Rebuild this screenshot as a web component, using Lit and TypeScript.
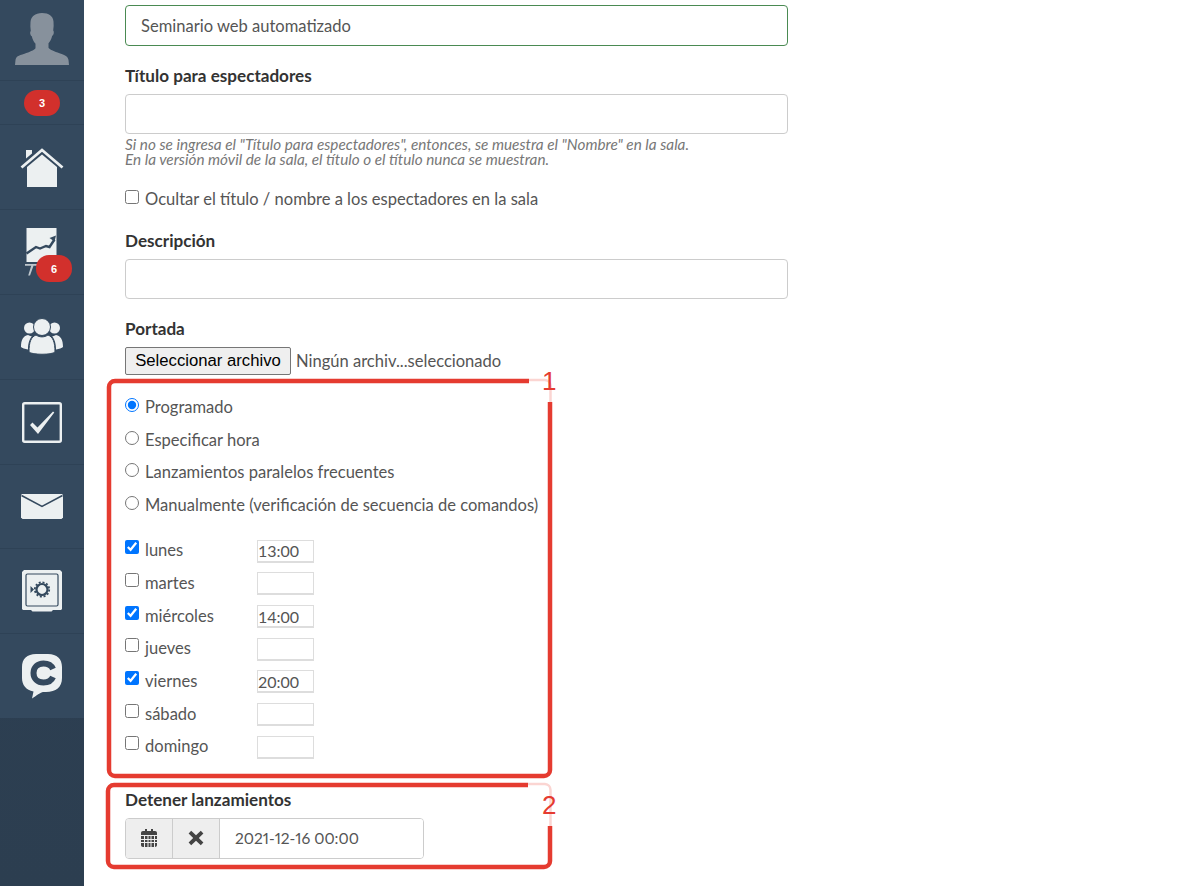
import { LitElement, html, css, svg } from "lit";
import { customElement } from "lit/decorators.js";

const radios = ["Programado", "Especificar hora", "Lanzamientos paralelos frecuentes", "Manualmente (verificación de secuencia de comandos)"];
const days: [string, string][] = [["lunes", "13:00"], ["martes", ""], ["miércoles", "14:00"], ["jueves", ""], ["viernes", "20:00"], ["sábado", ""], ["domingo", ""]];

const W = "#ecf0f1";
const D = "#34495e";
const icons = {
  avatar: svg`<svg width="56" height="54" viewBox="0 0 56 54"><path fill="#87919c" d="M28 0c-7 0-11 3.500-11.500 9-.3 3-.2 6 .3 9-.6.500-.8 1.500-.5 3 .3 1.300.8 2 1.500 2.300.7 3 2 5.500 3.700 7.500v4.500c-1.500 2-6 3.700-11 5.500C4 42.500 2 44 1.500 47L1 52h54l-.5-5c-.5-3-2.500-4.500-9-6.700-5-1.800-9.500-3.500-11-5.500v-4.500c1.700-2 3-4.500 3.700-7.500.7-.3 1.200-1 1.500-2.300.3-1.500.1-2.500-.5-3 .5-3 .6-6 .3-9C39 3 35 0 28 0z"/></svg>`,
  home: svg`<svg width="44" height="40" viewBox="0 0 44 40"><path fill="${W}" d="M22 7.500 37 20v20H7V20z"/><path fill="${W}" d="M6 3h6v3.500L6 11.500z"/><path fill="none" stroke="${W}" stroke-width="2.800" d="M1.500 20.500 22 3l20.500 17.500"/></svg>`,
  chart: svg`<svg width="34" height="48" viewBox="0 0 34 48"><path fill="${W}" d="M1.500 0h30v34h-30z"/><path fill="none" stroke="${D}" stroke-width="2.400" d="M1.500 25.500 11 19l4 1.500 6-2.500 3.500 1 5-7.500"/><path fill="${D}" d="M31 7.500l-6.500 2.500 5 3.500z"/><path fill="${W}" fill-opacity=".75" d="M0 36h20v1.800H8.500L5 47.500H3.200L6.200 37.800H0z"/></svg>`,
  users: svg`<svg width="44" height="38" viewBox="0 0 44 38"><g fill="${W}"><circle cx="9.500" cy="10" r="5.500"/><circle cx="34.500" cy="10" r="5.500"/><path d="M1 29c0-7 2-11 7-12 1.500 1 3 1.500 4 1-2.500 3-4 7-4 13.500C5 31 2 30 1 29zM43 29c0-7-2-11-7-12-1.500 1-3 1.500-4 1 2.500 3 4 7 4 13.500 3-.5 6-1.500 7-2.500z"/></g><circle cx="22" cy="9" r="8.500" fill="${W}" stroke="${D}" stroke-width="1"/><path fill="${W}" stroke="${D}" stroke-width="1" d="M9 34c0-10 2-15 7-17 3.500 2.500 8.500 2.500 12 0 5 2 7 7 7 17-3 3-23 3-26 0z"/></svg>`,
  check: svg`<svg width="40" height="41" viewBox="0 0 40 41"><rect x="1.200" y="1.200" width="37.600" height="38.600" rx="1.500" fill="none" stroke="${W}" stroke-width="2.400"/><path fill="${W}" d="M8 23l2.500-2.500 5 5L31 9.500l1.300 1L16 32z"/></svg>`,
  mail: svg`<svg width="42" height="25" viewBox="0 0 42 25"><path fill="${W}" d="M1 0h40l1 1v22.500L40.500 25h-39L0 23.500V1z"/><path fill="none" stroke="${D}" stroke-width="1.500" d="M.5 1.500 21 12.500 41.500 1.500"/></svg>`,
  safe: svg`<svg width="40" height="42" viewBox="0 0 40 42"><path fill="${W}" d="M2 0h36l2 2v37l-1 1H31l-1.500 1.500H10.500L9 40H1l-1-1V2z"/><rect x="4" y="4" width="32" height="32" rx="1.500" fill="${W}" stroke="${D}" stroke-width="1.200"/><circle cx="20" cy="19.500" r="5.500" fill="none" stroke="${D}" stroke-width="2.200"/><circle cx="20" cy="19.500" r="7.200" fill="none" stroke="${D}" stroke-width="1.800" stroke-dasharray="2 1.800"/><path fill="${D}" d="M8.500 16l3.500 3.500-3.500 3.500z"/></svg>`,
  chat: svg`<svg width="40" height="45" viewBox="0 0 40 45"><path fill="${W}" d="M14 0h12c9 0 14 5 14 13v11c0 9-6 14-16 14h-3c-2 0-7 4-11 6.500l1.500-7C4 36 0 31 0 24V13C0 5 5 0 14 0z"/><path fill="none" stroke="${D}" stroke-width="6" d="M31 15C29.500 11.500 26 9.500 21.500 9.500 15.500 9.500 11.500 13.500 11.500 19S15.500 28.500 21.500 28.500c4.500 0 8-2 9.500-5.500"/></svg>`,
};

@customElement("app-root")
export class AppRoot extends LitElement {
  static styles = css`
    :host { display: block; position: relative; height: 886px; overflow: hidden; background: #fff; font-family: "Lato", "Liberation Sans", sans-serif; font-size: 16.55px; color: #555; }
    .page { display: flex; height: 886px; }
    .side { width: 84px; flex: none; display: flex; flex-direction: column; background: linear-gradient(#2f4257, #2c3e50); }
    .nav { background: #34495e; display: flex; align-items: center; justify-content: center; height: 84px; border-bottom: 1px solid #2e4256; position: relative; flex: none; }
    .nav.top { height: 80px; }
    .nav.badge-row { height: 43px; }
    .nav.short { height: 83px; }
    .nav.last { border-bottom: none; }
    .badge { background: #d2302c; color: #fff; font: bold 11px "Liberation Sans", sans-serif; border-radius: 13px; display: flex; align-items: center; justify-content: center; width: 36px; height: 26px; }
    .badge.over { position: absolute; left: 36px; top: 45px; height: 27px; }
    svg { display: block; }
    .main { padding: 5px 0 0 41px; width: 663px; flex: none; display: flex; flex-direction: column; }
    .text { box-sizing: border-box; width: 663px; height: 40px; border: 1px solid #ccc; border-radius: 4px; padding: 0 15px; font: inherit; color: #555; background: #fff; display: block; outline: none; }
    .text.ok { height: 41px; border-color: #4a8a52; }
    label.h { display: block; font-weight: 700; font-size: 17.1px; color: #333; line-height: 20px; height: 20px; }
    .hint { font-style: italic; font-size: 15.3px; line-height: 14.500px; color: #777; margin-top: 3px; white-space: nowrap; }
    .chk { display: flex; align-items: center; height: 22px; gap: 6px; white-space: nowrap; }
    input[type=checkbox], input[type=radio] { width: 14px; height: 14px; margin: 0; flex: none; position: relative; top: -2px; }
    .file { display: flex; align-items: center; gap: 5px; height: 28px; margin-top: 8px; }
    .file button { box-sizing: border-box; width: 166px; height: 28px; font: 16.7px "Liberation Sans", sans-serif; color: #000; background: #efefef; border: 1px solid #767676; border-radius: 2px; padding: 0; }
    .radios { margin-top: 16px; display: flex; flex-direction: column; }
    .radios .chk { height: 32.600px; }
    .days { margin-top: 12.500px; display: flex; flex-direction: column; }
    .day { display: grid; grid-template-columns: 132px 57px; align-items: center; height: 32.700px; }
    .day .chk { height: 100%; }
    .day input[type=checkbox] { top: -3px; }
    .time { box-sizing: border-box; width: 57px; height: 23px; margin-top: 2px; border: 2px solid #ddd; border-width: 1px 1px 2px 1px; padding: 0; font: 16px "Lato", sans-serif; color: #555; outline: none; }
    .group { display: flex; width: 299px; height: 41px; margin-top: 8px; box-sizing: border-box; border: 1px solid #ccc; border-radius: 4px; overflow: hidden; }
    .addon { width: 47px; flex: none; box-sizing: border-box; background: #eee; border-right: 1px solid #ccc; display: flex; align-items: center; justify-content: center; }
    .group input { flex: 1; min-width: 0; border: 0; padding: 0 15px; font: 15.500px "Lato", sans-serif; font-variant-numeric: proportional-nums; color: #555; outline: none; }
    .notes { position: absolute; left: 0; top: 0; pointer-events: none; }
    .num { position: absolute; color: #e53b30; font: 26px "Liberation Sans", sans-serif; line-height: 26px; }
  `;

  render() {
    return html`
      <div class="page">
        <nav class="side">
          <div class="nav top">${icons.avatar}</div>
          <div class="nav badge-row"><span class="badge">3</span></div>
          <div class="nav">${icons.home}</div>
          <div class="nav">${icons.chart}<span class="badge over">6</span></div>
          <div class="nav">${icons.users}</div>
          <div class="nav">${icons.check}</div>
          <div class="nav short">${icons.mail}</div>
          <div class="nav">${icons.safe}</div>
          <div class="nav last">${icons.chat}</div>
        </nav>
        <main class="main">
          <input class="text ok" .value=${"Seminario web automatizado"} />
          <label class="h" style="margin-top:20px">Título para espectadores</label>
          <input class="text" style="margin-top:8px" />
          <div class="hint">Si no se ingresa el "Título para espectadores", entonces, se muestra el "Nombre" en la sala.<br />En la versión móvil de la sala, el título o el título nunca se muestran.</div>
          <label class="chk" style="margin-top:22px"><input type="checkbox" />Ocultar el título / nombre a los espectadores en la sala</label>
          <label class="h" style="margin-top:21px">Descripción</label>
          <input class="text" style="margin-top:8px" />
          <label class="h" style="margin-top:20px">Portada</label>
          <div class="file"><button>Seleccionar archivo</button><span>Ningún archiv...seleccionado</span></div>
          <div class="radios">
            ${radios.map((r, i) => html`<label class="chk"><input type="radio" name="m" ?checked=${i === 0} />${r}</label>`)}
          </div>
          <div class="days">
            ${days.map(([d, t]) => html`<div class="day"><label class="chk"><input type="checkbox" ?checked=${!!t} />${d}</label><input class="time" .value=${t} /></div>`)}
          </div>
          <label class="h" style="margin-top:27px">Detener lanzamientos</label>
          <div class="group">
            <span class="addon"><svg width="18" height="18" viewBox="0 0 18 18"><path fill="#444" d="M3 2h2V0h2v2h4V0h2v2h2c1.200 0 2 .8 2 2v2H1V4c0-1.200.8-2 2-2zM1 7h16v9c0 1.200-.8 2-2 2H3c-1.200 0-2-.8-2-2z"/><path stroke="#eee" stroke-width="1" d="M1 10.500h16M1 13.500h16M4.500 7v11M8 7v11M11 7v11M14.500 7v11"/></svg></span>
            <span class="addon"><svg width="16" height="16" viewBox="0 0 16 16"><path fill="#444" d="M3.200 .8 8 5.200 12.800.8 15.400 3.400 10.800 8l4.600 4.600-2.600 2.600L8 10.800l-4.800 4.400-2.600-2.600L5.200 8 .6 3.400z"/></svg></span>
            <input .value=${"2021-12-16 00:00"} />
          </div>
        </main>
      </div>
      <svg class="notes" width="1200" height="886" fill="none" stroke-width="4.500">
        <path stroke="#e53b30" d="M529 381H115a6 6 0 0 0-6 6V770a6 6 0 0 0 6 6H544a6 6 0 0 0 6-6V402"/>
        <path stroke="#fbd5d2" stroke-width="2.500" d="M529 380H545a6 6 0 0 1 5.500 6V402"/>
        <path stroke="#e53b30" d="M528 785H114a6 6 0 0 0-6 6V861a6 6 0 0 0 6 6H544a6 6 0 0 0 6-6V826"/>
        <path stroke="#fbd5d2" stroke-width="2.500" d="M528 784H545a6 6 0 0 1 5.500 6V826"/>
      </svg>
      <span class="num" style="left:542px;top:368px">1</span>
      <span class="num" style="left:542px;top:792px">2</span>
    `;
  }
}
